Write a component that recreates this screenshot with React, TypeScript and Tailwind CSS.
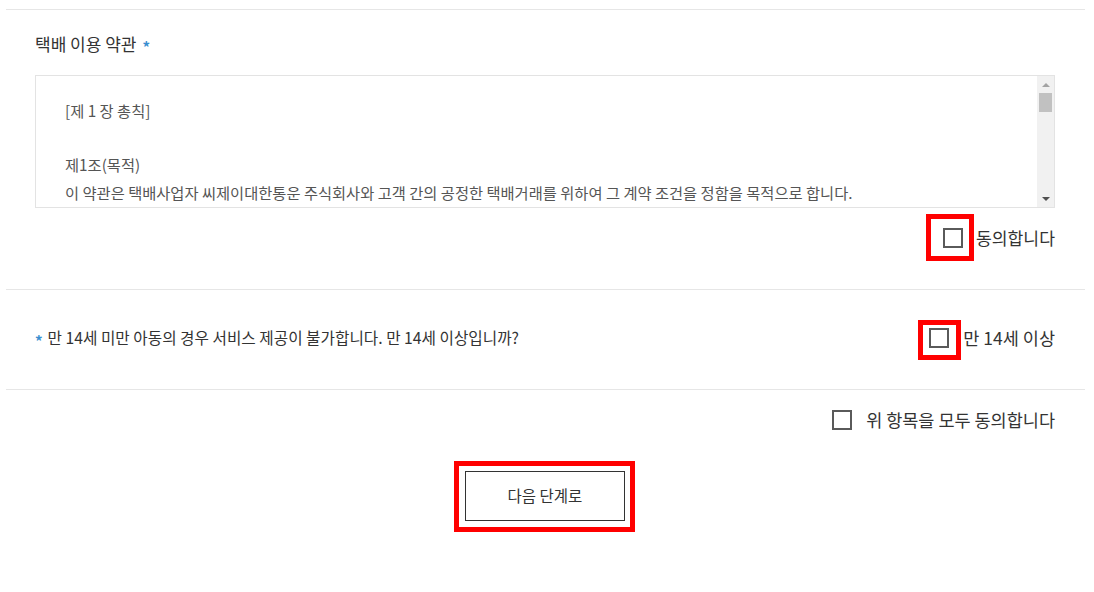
import React from "react";

const font = { fontFamily: '"Noto Sans CJK KR", "Noto Sans", sans-serif' };

function Box({ children }: { children?: React.ReactNode }) {
  return (
    <span className="relative inline-block w-[20px] h-[20px] border-2 border-[#5a5a5a] bg-white shrink-0">
      {children}
    </span>
  );
}

function Star({ className }: { className?: string }) {
  return (
    <span className={"inline-block text-[15px] leading-[20px] font-bold text-[#3b8fd0] translate-y-[3px] " + (className ?? "")}>
      *
    </span>
  );
}

export default function App() {
  return (
    <div className="w-[1094px] h-[592px] bg-white pt-[9px] pl-[6px] text-[#333]" style={font}>
      <div className="w-[1079px]">
        <section className="border-t border-[#e6e6e6] pl-[29px] pr-[30px] pt-[24px] pb-[41px]">
          <div className="h-[20px] flex items-center text-[17px] leading-[20px] text-[#333]">
            택배 이용 약관
            <Star className="ml-[6px]" />
          </div>
          <div className="mt-[21px] h-[133px] border border-[#e3e3e3] flex">
            <div className="flex-1 overflow-hidden pl-[29px] pt-[20px] text-[15.3px] leading-[28px] text-[#555]">
              <p className="mb-[26px]">[제 1 장 총칙]</p>
              <p>제1조(목적)</p>
              <p>이 약관은 택배사업자 씨제이대한통운 주식회사와 고객 간의 공정한 택배거래를 위하여 그 계약 조건을 정함을 목적으로 합니다.</p>
            </div>
            <div className="w-[17px] bg-[#f1f1f1] flex flex-col items-center">
              <div className="h-[17px] flex items-center justify-center">
                <div className="w-0 h-0 border-l-[4px] border-r-[4px] border-b-[4px] border-l-transparent border-r-transparent border-b-[#a3a3a3]" />
              </div>
              <div className="w-[13px] h-[19px] bg-[#c1c1c1]" />
              <div className="flex-1" />
              <div className="h-[17px] flex items-center justify-center">
                <div className="w-0 h-0 border-l-[4px] border-r-[4px] border-t-[4px] border-l-transparent border-r-transparent border-t-[#505050]" />
              </div>
            </div>
          </div>
          <div className="mt-[20px] h-[20px] flex items-center justify-end">
            <Box>
              <span className="absolute left-[-19px] top-[-16px] w-[48px] h-[47px] border-[5px] border-[#ff0000]" />
            </Box>
            <span className="ml-[13px] text-[17.2px] leading-[20px] text-[#333]">동의합니다</span>
          </div>
        </section>
        <section className="border-t border-[#e6e6e6] pl-[29px] pr-[30px] pt-[38px] pb-[41px]">
          <div className="h-[20px] flex items-center justify-between">
            <div className="text-[15.7px] leading-[20px] text-[#333] flex items-center">
              <Star className="mr-[5px]" />
              만 14세 미만 아동의 경우 서비스 제공이 불가합니다. 만 14세 이상입니까?
            </div>
            <div className="flex items-center">
              <Box>
                <span className="absolute left-[-13px] top-[-10px] w-[43px] h-[40px] border-[5px] border-[#ff0000]" />
              </Box>
              <span className="ml-[14px] text-[17.5px] leading-[20px] text-[#333]">만 14세 이상</span>
            </div>
          </div>
        </section>
        <section className="border-t border-[#e6e6e6] pl-[29px] pr-[30px] pt-[20px]">
          <div className="h-[20px] flex items-center justify-end">
            <Box />
            <span className="ml-[14px] text-[17.5px] leading-[20px] text-[#333]">위 항목을 모두 동의합니다</span>
          </div>
          <div className="mt-[41px] flex justify-center">
            <button className="relative w-[160px] h-[50px] border border-[#333] bg-white text-[15.5px] text-[#333]" style={font}>
              <span className="absolute left-[-12px] top-[-11px] w-[181px] h-[71px] border-[5px] border-[#ff0000]" />
              다음 단계로
            </button>
          </div>
        </section>
      </div>
    </div>
  );
}
